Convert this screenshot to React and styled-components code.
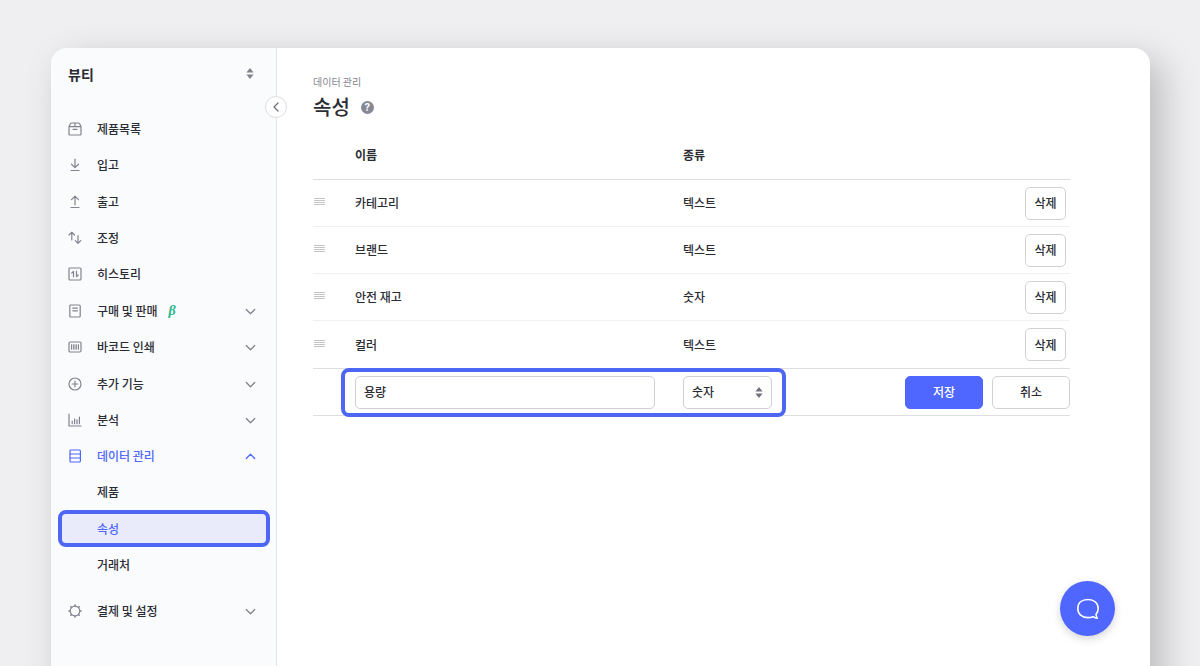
import React, { useState } from 'react'
import styled, { createGlobalStyle, css } from 'styled-components'

const GlobalStyle = createGlobalStyle`
  * {
    box-sizing: border-box;
  }
  body {
    margin: 0;
    background: #efeff1;
    color: #2b2c33;
    font-family: 'Noto Sans CJK KR', 'Noto Sans', sans-serif;
    font-size: 12px;
    line-height: 18px;
  }
  button, input, select {
    font: inherit;
    color: inherit;
  }
  ul {
    list-style: none;
    margin: 0;
    padding: 0;
  }
`

const Page = styled.div`
  display: flex;
  height: 100vh;
  padding: 48px 50px 0 51px;
  overflow: hidden;
`
const Panel = styled.div`
  display: flex;
  flex: 1;
  margin-bottom: -60px;
  border-radius: 16px;
  background: #fff;
  box-shadow: 12px 12px 36px rgba(0, 0, 0, 0.22);
`
const Sidebar = styled.aside`
  position: relative;
  flex: none;
  width: 226px;
  border-right: 1px solid #e4e4e8;
  border-radius: 16px 0 0 16px;
  background: #fafbfd;
`
const TeamButton = styled.button`
  display: flex;
  align-items: center;
  justify-content: space-between;
  width: 100%;
  height: 51px;
  padding: 0 22px 0 17px;
  border: 0;
  background: none;
  font-size: 14px;
  font-weight: 600;
`
const CollapseButton = styled.button`
  position: absolute;
  top: 48px;
  right: -11px;
  display: flex;
  align-items: center;
  justify-content: center;
  width: 22px;
  height: 22px;
  padding: 0;
  border: 1px solid #dedee3;
  border-radius: 50%;
  background: #fff;
  color: #6b6c76;
`
const Nav = styled.nav`
  display: flex;
  flex-direction: column;
  gap: 1px;
  padding-top: 12px;
`
const Settings = styled.ul`
  && {
    margin-top: 9px;
  }
`
const NavLink = styled.a`
  display: flex;
  align-items: center;
  height: 36px;
  padding: 0 20px 0 17px;
  color: ${props => props.$active ? '#4f67ff' : 'inherit'};
  font-weight: 500;
  text-decoration: none;
`
const NavIcon = styled.span`
  display: flex;
  width: 29px;
  padding-bottom: 1px;
  color: ${props => props.$active ? '#4f67ff' : '#82838e'};
`
const Arrow = styled.span`
  display: flex;
  margin-left: auto;
  color: ${props => props.$active ? '#4f67ff' : '#82838e'};
`
const Beta = styled.span`
  margin-left: 11px;
  color: #2bb58c;
  font-family: 'Liberation Serif', serif;
  font-size: 14px;
  font-style: italic;
  font-weight: 700;
`
const SubLink = styled.a`
  display: flex;
  align-items: center;
  height: 36px;
  padding-left: 46px;
  color: inherit;
  font-weight: 500;
  text-decoration: none;
  ${props => props.$active && css`
    height: 37px;
    margin: 0 6px 0 7px;
    padding-left: 35px;
    border: 4px solid #4d66f4;
    border-radius: 8px;
    background: #e9eafa;
    color: #4f67ff;
  `}
`
const Main = styled.main`
  flex: 1;
  min-width: 0;
  padding: 25px 80px 0 36px;
`
const Crumb = styled.div`
  color: #85868f;
  font-size: 10px;
  line-height: 18px;
`
const TitleRow = styled.div`
  display: flex;
  align-items: center;
  gap: 11px;
`
const Title = styled.h1`
  margin: 0;
  font-size: 20px;
  font-weight: 500;
  line-height: 32px;
`
const HelpButton = styled.button`
  width: 13px;
  height: 13px;
  padding: 0;
  border: 0;
  border-radius: 50%;
  background: #868895;
  color: #fff;
  font-family: Inter, sans-serif;
  font-size: 10px;
  font-weight: 700;
  line-height: 13px;
`
const Table = styled.table`
  width: 100%;
  margin-top: 8px;
  border-collapse: separate;
  border-spacing: 0;
  table-layout: fixed;
`
const Col = styled.col`
  width: ${props => props.$width};
`
const Th = styled.th`
  height: 49px;
  padding: 0;
  border-bottom: 1px solid #dcdde0;
  font-weight: 600;
  text-align: left;
`
const Td = styled.td`
  height: 47px;
  padding: 0;
  border-bottom: 1px solid #f0f0f2;
  font-weight: 500;
  tr:nth-last-child(2) > & {
    height: 48px;
  }
  tr:nth-last-child(-n + 2) > & {
    border-bottom-color: #dfdfe2;
  }
`
const DragHandle = styled.button`
  display: flex;
  margin-bottom: 2px;
  padding: 0;
  border: 0;
  background: none;
  color: #c4c4c8;
  cursor: grab;
`
const Actions = styled.div`
  display: flex;
  justify-content: flex-end;
  gap: 9px;
  padding-right: ${props => props.$inset ? '4px' : '0'};
`
const Button = styled.button`
  width: ${props => props.$small ? '41px' : '78px'};
  height: 33px;
  padding: 0;
  border: 1px solid ${props => props.$primary ? '#4f67ff' : '#d2d2d6'};
  border-radius: 5px;
  background: ${props => props.$primary ? '#4f67ff' : '#fff'};
  color: ${props => props.$primary ? '#fff' : 'inherit'};
  font-weight: 500;
`
const EditFields = styled.div`
  position: relative;
  display: inline-flex;
  gap: 28px;
  vertical-align: middle;
  &::after {
    content: '';
    position: absolute;
    inset: -8px -14px;
    border: 4px solid #4d66f4;
    border-radius: 8px;
    pointer-events: none;
  }
`
const field = css`
  height: 33px;
  padding: 0 8px;
  border: 1px solid #cfcfd6;
  border-radius: 5px;
  background: #fff;
  font-weight: 500;
`
const NameInput = styled.input`
  ${field}
  width: 300px;
  padding-bottom: 1px;
`
const SelectWrap = styled.div`
  position: relative;
  color: #71727f;
  svg {
    position: absolute;
    top: 11px;
    right: 9px;
    pointer-events: none;
  }
`
const TypeSelect = styled.select`
  ${field}
  width: 89px;
  color: #2b2c33;
  appearance: none;
`
const ChatButton = styled.button`
  position: fixed;
  right: 85px;
  bottom: 30px;
  display: flex;
  align-items: center;
  justify-content: center;
  width: 55px;
  height: 55px;
  padding: 0;
  border: 0;
  border-radius: 50%;
  background: #4f67ff;
  color: #fff;
  box-shadow: 0 3px 8px rgba(0, 0, 0, 0.16);
`

const Svg = ({ w = 14, h = 14, children, stroke = 1.2 }) => (
  <svg width={w} height={h} viewBox={`0 0 ${w} ${h}`} fill="none" stroke="currentColor" strokeWidth={stroke} strokeLinecap="round" strokeLinejoin="round" aria-hidden="true">
    {children}
  </svg>
)

const icons = {
  box: <path d="M1 4.600 2.400 1.700Q2.700 1 3.400 1h7.200q.7 0 1 .7L13 4.600V12q0 1-1 1H2q-1 0-1-1zM1 4.600h12M7 1v3.600M5 7.300h4" />,
  down: <path d="M7 1v8.500M3.500 6.200 7 9.600l3.500-3.400M3 12.500h8" />,
  up: <path d="M7 9.800V1.300M3.500 4.600 7 1.200l3.500 3.400M3 12.500h8" />,
  adjust: <path d="M3.800 9V1.500M1 4l2.800-2.700L6.600 4M10 4.500V12M7.200 9.600 10 12.300l2.800-2.700" />,
  history: <><rect x="1" y="1" width="12" height="12" rx="1" /><path d="M5.500 9.800V4.300L3.800 6M8.500 4.200v5.500L10.200 8" /></>,
  doc: <><rect x="1.800" y="1" width="10.400" height="12" rx="1" /><path d="M4.800 4.200h4.600M4.800 6.800h4.600" /></>,
  barcode: <><rect x="1" y="2" width="12" height="10" rx="1.200" /><path strokeWidth="1" d="M3.500 4.700v4.600M5.300 4.700v4.600M7 4.700v4.600M8.700 4.700v4.600M10.500 4.700v4.600" /></>,
  plus: <><circle cx="7" cy="7" r="6" /><path d="M7 4.200v5.600M4.200 7h5.600" /></>,
  chart: <path d="M1 1v12h12M4.200 8v2.700M6.600 6v4.700M9 6.800v3.900M11.400 4v6.700" />,
  data: <><rect x="2" y="1" width="10.400" height="12" rx="1" /><path d="M2 5h10.400M2 9h10.400" /></>,
  gear: <><circle cx="7" cy="7" r="4.800" /><path strokeWidth="1.600" d="M7 1v.8M7 12.200v.8M1 7h.8M12.200 7h.8M2.800 2.800l.5.5M10.700 10.700l.5.500M2.800 11.200l.5-.5M10.700 3.300l.5-.5" /></>,
}

const Sorter = () => (
  <svg width="8" height="11" viewBox="0 0 8 11" fill="currentColor" aria-hidden="true">
    <path d="M4 0 7.600 4.500H.4zM4 11 .4 6.500h7.200z" />
  </svg>
)

const Chevron = ({ open }) => (
  <Svg w={11} h={7} stroke={1.3}>
    <path d={open ? 'M1.300 5.500l4.200-4.200 4.200 4.200' : 'M1.300 1.500l4.200 4.200 4.200-4.200'} />
  </Svg>
)

const navGroups = [
  [
    { icon: 'box', label: '제품목록' },
    { icon: 'down', label: '입고' },
  ],
  [
    { icon: 'up', label: '출고' },
    { icon: 'adjust', label: '조정' },
    { icon: 'history', label: '히스토리' },
  ],
  [
    { icon: 'doc', label: '구매 및 판매', beta: true, arrow: true },
    { icon: 'barcode', label: '바코드 인쇄', arrow: true },
  ],
  [
    { icon: 'plus', label: '추가 기능', arrow: true },
    { icon: 'chart', label: '분석', arrow: true },
    { icon: 'data', label: '데이터 관리', arrow: true, open: true, items: ['제품', '속성', '거래처'] },
  ],
]

const attributes = [
  { name: '카테고리', type: '텍스트' },
  { name: '브랜드', type: '텍스트' },
  { name: '안전 재고', type: '숫자' },
  { name: '컬러', type: '텍스트' },
]

const NavItem = ({ icon, label, beta, arrow, open, items }) => (
  <li>
    <NavLink href="#" $active={open}>
      <NavIcon $active={open}><Svg>{icons[icon]}</Svg></NavIcon>
      {label}
      {beta && <Beta>β</Beta>}
      {arrow && <Arrow $active={open}><Chevron open={open} /></Arrow>}
    </NavLink>
    {items && <ul>
      {items.map(item => (
        <li key={item}><SubLink href="#" $active={item === '속성'}>{item}</SubLink></li>
      ))}
    </ul>}
  </li>
)

const EditRow = () => {
  const [name, setName] = useState('용량')
  const [type, setType] = useState('숫자')
  return <tr>
    <Td />
    <Td colSpan={2}>
      <EditFields>
        <NameInput aria-labelledby="col-name" value={name} onChange={e => setName(e.target.value)} />
        <SelectWrap>
          <TypeSelect aria-labelledby="col-type" value={type} onChange={e => setType(e.target.value)}>
            <option>숫자</option>
            <option>텍스트</option>
          </TypeSelect>
          <Sorter />
        </SelectWrap>
      </EditFields>
    </Td>
    <Td>
      <Actions>
        <Button $primary>저장</Button>
        <Button>취소</Button>
      </Actions>
    </Td>
  </tr>
}

const App = () => {
  return <>
    <GlobalStyle />
    <Page>
      <Panel>
        <Sidebar>
          <TeamButton>
            뷰티
            <Arrow><Sorter /></Arrow>
          </TeamButton>
          <CollapseButton aria-label="메뉴 접기">
            <Svg w={6} h={10}><path d="M5 1 1 5l4 4" /></Svg>
          </CollapseButton>
          <Nav>
            {navGroups.map((group, i) => (
              <ul key={i}>
                {group.map(item => <NavItem key={item.label} {...item} />)}
              </ul>
            ))}
            <Settings>
              <NavItem icon="gear" label="결제 및 설정" arrow />
            </Settings>
          </Nav>
        </Sidebar>
        <Main>
          <Crumb>데이터 관리</Crumb>
          <TitleRow>
            <Title>속성</Title>
            <HelpButton aria-label="도움말">?</HelpButton>
          </TitleRow>
          <Table>
            <colgroup>
              <Col $width="42px" />
              <Col $width="328px" />
              <Col />
              <Col $width="166px" />
            </colgroup>
            <thead>
              <tr>
                <Th />
                <Th id="col-name">이름</Th>
                <Th id="col-type">종류</Th>
                <Th />
              </tr>
            </thead>
            <tbody>
              {attributes.map(({ name, type }) => (
                <tr key={name}>
                  <Td>
                    <DragHandle aria-label="순서 변경">
                      <Svg w={13} h={8} stroke={1}><path d="M1.500 .5h10M1.500 2.500h10M1.500 4.500h10M1.500 6.500h10" /></Svg>
                    </DragHandle>
                  </Td>
                  <Td>{name}</Td>
                  <Td>{type}</Td>
                  <Td>
                    <Actions $inset>
                      <Button $small>삭제</Button>
                    </Actions>
                  </Td>
                </tr>
              ))}
              <EditRow />
            </tbody>
          </Table>
        </Main>
      </Panel>
      <ChatButton aria-label="채팅 상담">
        <Svg w={24} h={22} stroke={1.600}>
          <path d="M12 1.500c6.200 0 10.200 3.600 10.200 9 0 2.300-.8 4.300-2.200 5.800.2 1.400.6 2.700 1.200 4-1.600-.1-3-.6-4.200-1.600-1.400.6-3.100.9-5 .9-6.200 0-10.200-3.600-10.200-9.100S5.800 1.500 12 1.500z" />
        </Svg>
      </ChatButton>
    </Page>
  </>
}

export default App
